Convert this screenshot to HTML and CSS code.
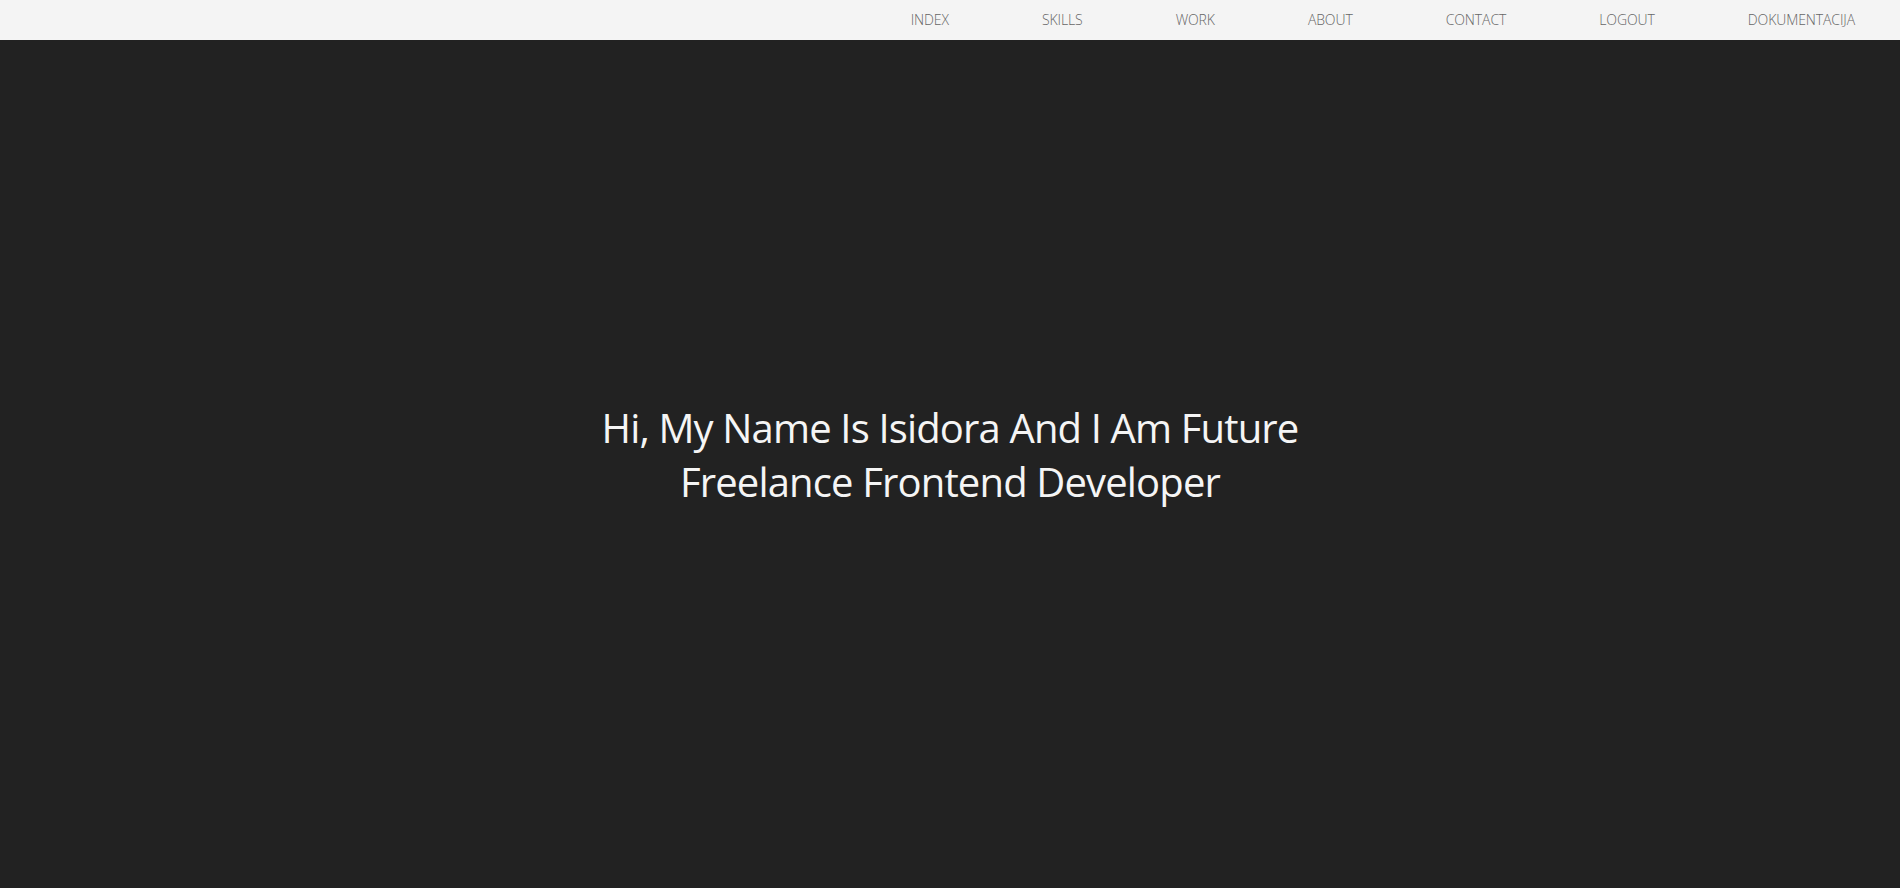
FILE: index.html
```html
<!DOCTYPE html>
<html lang="en">
<head>
<meta charset="utf-8">
<title>Isidora</title>
<link rel="stylesheet" href="styles.css">
</head>
<body>
<header class="topbar">
  <nav class="menu">
    <a class="menu-link" href="#">INDEX</a>
    <a class="menu-link" href="#">SKILLS</a>
    <a class="menu-link" href="#">WORK</a>
    <a class="menu-link" href="#">ABOUT</a>
    <a class="menu-link" href="#">CONTACT</a>
    <a class="menu-link" href="#">LOGOUT</a>
    <a class="menu-link" href="#">DOKUMENTACIJA</a>
  </nav>
</header>
<main class="hero">
  <h1 class="hero-title">Hi, My Name Is Isidora And I Am Future<br>Freelance Frontend Developer</h1>
</main>
</body>
</html>
```
FILE: styles.css
```css
html, body {
  margin: 0;
  padding: 0;
  height: 100%;
}
body {
  background: #222222;
  font-family: "Open Sans", "Liberation Sans", sans-serif;
  overflow: hidden;
}
.topbar {
  height: 40px;
  background: #f4f4f4;
  display: flex;
  justify-content: flex-end;
  align-items: flex-start;
  padding-right: 45px;
}
.menu {
  display: flex;
  gap: 93px;
}
.menu-link {
  font-size: 14px;
  font-weight: 300;
  letter-spacing: -0.1px;
  color: #666666;
  text-decoration: none;
  line-height: 39px;
}
.hero {
  height: 848px;
  box-sizing: border-box;
  padding-bottom: 19px;
  display: flex;
  align-items: center;
  justify-content: center;
}
.hero-title {
  margin: 0;
  text-align: center;
  color: #f5f5f5;
  font-size: 40px;
  font-weight: 400;
  letter-spacing: -0.85px;
  line-height: 54px;
}
```
